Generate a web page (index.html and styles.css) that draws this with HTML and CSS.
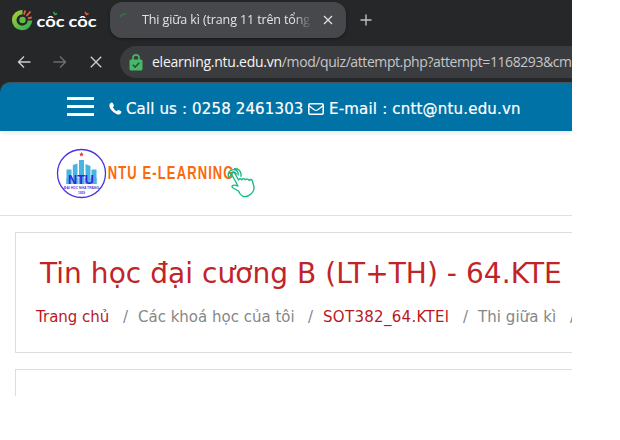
FILE: index.html
```html
<!DOCTYPE html>
<html lang="vi">
<head>
<meta charset="utf-8">
<title>NTU E-Learning</title>
<link rel="stylesheet" href="styles.css">
</head>
<body>
<div class="window">
  <header class="chrome">
    <div class="tabs">
      <svg class="brand" width="88" height="28" viewBox="0 0 88 28">
        <defs><linearGradient id="leaf" x1="0" y1="0" x2="1" y2="1"><stop offset="0" stop-color="#a0cf3a"/><stop offset="1" stop-color="#35ad56"/></linearGradient></defs>
        <path d="M10.500 6.200A7.900 7.900 0 1 0 18 14.500" fill="none" stroke="url(#leaf)" stroke-width="4.600"/>
        <circle cx="10.500" cy="14" r="3.200" fill="#61b946"/>
        <path d="M12 8.500l1.200-4M14.500 10l4-4.500M16 12.300l3.800-1" fill="none" stroke="#ee6140" stroke-width="1.800"/>
        <text class="brand-word" x="24.500" y="20.800" textLength="28" lengthAdjust="spacingAndGlyphs">côc</text>
        <text class="brand-word" x="56.500" y="20.800" textLength="28" lengthAdjust="spacingAndGlyphs">côc</text>
        <path d="M41.500 5.800l1.500 2.700 2-1" fill="none" stroke="#36a85a" stroke-width="1.500"/>
        <path d="M73 5.800l1.500 2.700 2-1" fill="none" stroke="#e65c3a" stroke-width="1.500"/>
      </svg>
      <div class="tab">
        <svg class="spinner" width="12" height="12" viewBox="0 0 12 12"><path d="M1 5Q3 2 7.500 1.600" fill="none" stroke="#327445" stroke-width="1.500"/></svg>
        <span class="tab-title">Thi giữa kì (trang 11 trên tổng</span>
        <svg class="close" width="10" height="10" viewBox="0 0 10 10"><path d="M1 1l8 8M9 1l-8 8" stroke="#dedfe0" stroke-width="1.300"/></svg>
      </div>
      <svg class="plus" width="12" height="12" viewBox="0 0 12 12"><path d="M6 .5v11M.5 6h11" stroke="#bfc0c2" stroke-width="1.400"/></svg>
    </div>
    <div class="toolbar">
      <svg width="14" height="14" viewBox="0 0 14 14"><path d="M13.500 7H1.500M7 1.500L1.500 7 7 12.500" fill="none" stroke="#cbcccd" stroke-width="1.400"/></svg>
      <svg width="14" height="14" viewBox="0 0 14 14"><path d="M.5 7h12M7 1.500L12.500 7 7 12.500" fill="none" stroke="#6d6e70" stroke-width="1.400"/></svg>
      <svg width="14" height="14" viewBox="0 0 14 14"><path d="M1.800 1.800l10.400 10.400M12.200 1.800L1.800 12.200" stroke="#cbcccd" stroke-width="1.400"/></svg>
      <div class="address">
        <svg width="14" height="17" viewBox="0 0 14 17"><path d="M4 6V3.800a3 3 0 0 1 6 0V6" fill="none" stroke="#47b866" stroke-width="1.700"/><rect x=".5" y="5.500" width="13" height="11" rx="1.500" fill="#47b866"/><path d="M3.800 10.800l2.300 2.300 4.200-4.300" fill="none" stroke="#2e4e39" stroke-width="1.500"/></svg>
        <span class="url"><b>elearning.ntu.edu.vn</b>/mod/quiz/attempt.php?attempt=1168293&amp;cm</span>
      </div>
    </div>
  </header>
  <div class="page">
    <nav class="topbar">
      <span class="menu"><i></i><i></i><i></i></span>
      <svg class="phone" width="13" height="13" viewBox="0 0 13 13"><path d="M.8 1.800L2.500.6Q3.300.3 3.700 1l1.200 2.300q.3.600-.3 1.100L3.800 5.200q1.300 2.600 4 4l.9-.9q.5-.5 1.100-.2l2.200 1.200q.6.300.4 1l-.8 1.500q-1.500 1.200-4.200.1Q2 9.400.5 4.800.1 3.200.8 1.800z" fill="#fff"/></svg>
      <span class="contact call">Call us : 0258 2461303</span>
      <svg class="mail" width="16" height="12" viewBox="0 0 16 12"><rect x=".8" y=".8" width="14.400" height="10.500" rx="1.200" fill="none" stroke="#fff" stroke-width="1.500"/><path d="M1 2.800l5.200 4q1.800 1.300 3.600 0l5.200-4" fill="none" stroke="#fff" stroke-width="1.300"/></svg>
      <span class="contact email">E-mail : cntt@ntu.edu.vn</span>
    </nav>
    <div class="masthead">
      <svg width="200" height="60" viewBox="0 0 200 60">
        <circle cx="25.500" cy="29.500" r="24" fill="#fff" stroke="#4a35df" stroke-width="1.300"/>
        <path d="M10.500 40V25.500h5V40zM16.800 40V21l4.700-1.500V40zM23 40V16h5v24zM29.500 40V20l5 2v18zM35.500 40V25.500h5V40z" fill="#48b4e2"/>
        <path d="M10 34h31v6H10z" fill="#48b4e2" opacity=".6"/>
        <path d="M25.500 8l.7 1.600 1.600.1-1.200 1.100.4 1.700-1.500-.9-1.500.9.400-1.700-1.200-1.100 1.600-.1z" fill="#e93232"/>
        <text class="seal" x="12" y="40" textLength="26" lengthAdjust="spacingAndGlyphs">NTU</text>
        <text class="seal-small" x="8" y="45" textLength="35" lengthAdjust="spacingAndGlyphs">ĐẠI HỌC NHA TRANG</text>
        <text class="seal-small" x="22" y="49.500" textLength="7" lengthAdjust="spacingAndGlyphs">1959</text>
        <text class="wordmark" transform="translate(51.800 35) scale(.7 1)" textLength="179.500">NTU E-LEARNING</text>
        <g fill="none" stroke="#1dba87" stroke-width="1.400" stroke-linejoin="round">
          <path d="M182.500 47l-5.500-3q-2-1.500 0-2.600 1.500-.8 5 .6L176 31q-.5-2.500 1.500-2.500 1 0 1.700 1.500l3.300 6q1-2.500 3.300-.2 1.500-2.500 3.500 0 2.500-1.800 4 .8 1.500-2.200 3 0l1.500 5.400q1 4.500-2.800 8-3.500 3.300-8 2.500-3.500-2.300-4.500-5.500z"/>
          <path d="M173.500 34q-3-4.500 1-7.500 5.500-2.500 7.500 2l.3 3M175 32.500q-1-3 1.500-4.500 3-.5 4 2.500M178 24.800q6-.5 7 5v3"/>
        </g>
      </svg>
    </div>
    <main>
      <section class="card heading">
        <h1>Tin học đại cương B (LT+TH) - 64.KTE</h1>
        <div class="crumbs">
          <a class="c1">Trang chủ</a><span class="slash">/</span><span class="c2">Các khoá học của tôi</span><span class="slash">/</span><a class="c3">SOT382_64.KTEl</a><span class="slash">/</span><span class="c4">Thi giữa kì</span><span class="slash">/</span>
        </div>
      </section>
      <section class="card"></section>
    </main>
  </div>
</div>
</body>
</html>
```

FILE: styles.css
```css
* { box-sizing: border-box; }
body { margin: 0; background: #fff; font-family: "DejaVu Sans", sans-serif; }
svg { display: block; flex: none; overflow: visible; }
.window { width: 572px; height: 396px; overflow: hidden; background: #262729; white-space: nowrap; }
.chrome { height: 82px; }
.tabs { height: 46px; display: flex; align-items: flex-start; }
.brand { margin: 6px 0 0 12px; }
.brand-word { font: 700 16px "Lato", sans-serif; fill: #fff; }
.tab { width: 236px; height: 36px; margin: 2px 0 0 10px; border-radius: 12px; background: #47484b; display: flex; align-items: center; box-shadow: 0 1px 3px #17181a; }
.spinner { margin: -4px 0 0 9px; }
.tab-title { width: 172px; margin-left: 11px; overflow: hidden; font: 12.5px/20px "Open Sans", sans-serif; letter-spacing: -.12px; color: #e3e3e4; -webkit-mask-image: linear-gradient(90deg, #000 152px, transparent 170px); mask-image: linear-gradient(90deg, #000 152px, transparent 170px); }
.close { margin-left: 9px; }
.plus { margin: 14px 0 0 14px; }
.toolbar { height: 32px; display: flex; align-items: center; gap: 22px; padding-left: 17px; }
.address { flex: 1; min-width: 0; height: 32px; margin-left: -5px; padding-left: 9px; border-radius: 16px 0 0 16px; background: #3b3c3f; display: flex; align-items: center; gap: 9px; }
.url { font: 14px/20px "Open Sans", sans-serif; letter-spacing: -.41px; color: #c6c7c9; }
.url b { font-weight: 400; letter-spacing: -.25px; color: #f5f5f5; }
.page { height: 314px; background: linear-gradient(#262729 12px, #fff 12px); }
.topbar { height: 49px; background: #0072a5; border-top: 1px solid #41545f; border-radius: 10px 0 0 0; display: flex; align-items: center; padding: 3px 0 0 67px; box-shadow: 0 3px 4px -1px rgba(0,0,0,.1); color: #fff; }
.menu { width: 27px; height: 19px; margin: -5px 15px 0 0; display: flex; flex-direction: column; justify-content: space-between; }
.menu i { height: 3px; background: #fff; }
.phone { margin-right: 4px; }
.contact { font-size: 15px; line-height: 20px; letter-spacing: .14px; -webkit-text-stroke: .2px #fff; }
.call { width: 177px; }
.mail { margin: 0 5px; }
.email { letter-spacing: .19px; }
.masthead { height: 85px; padding: 13px 0 0 56px; border-bottom: 1px solid #dee0e1; }
.seal { font: 700 12.5px "Liberation Sans", sans-serif; fill: #3724db; }
.seal-small { font: 700 3.8px "Liberation Sans", sans-serif; fill: #4c37dd; }
.wordmark { font: 700 18.500px "Liberation Sans", sans-serif; fill: #fb690c; }
main { padding: 16px 0 0 15px; }
.card { height: 121px; margin-bottom: 16px; border: 1px solid #dcddde; border-right: 0; }
.heading { padding: 22px 0 0 20px; overflow: hidden; }
h1 { margin: 0 0 0 4px; font-size: 28px; line-height: 38px; font-weight: 400; letter-spacing: .05px; color: #c12428; }
.crumbs { display: flex; margin-top: 13px; font-size: 15px; line-height: 22px; color: #858789; }
.crumbs > * { flex: none; }
.crumbs a { color: #b9171f; }
.slash { width: 28px; padding-left: 13px; }
.c1 { width: 74px; }
.c2 { width: 157px; }
.c3 { width: 127px; letter-spacing: .3px; }
.c4 { width: 79px; letter-spacing: .05px; }
```
